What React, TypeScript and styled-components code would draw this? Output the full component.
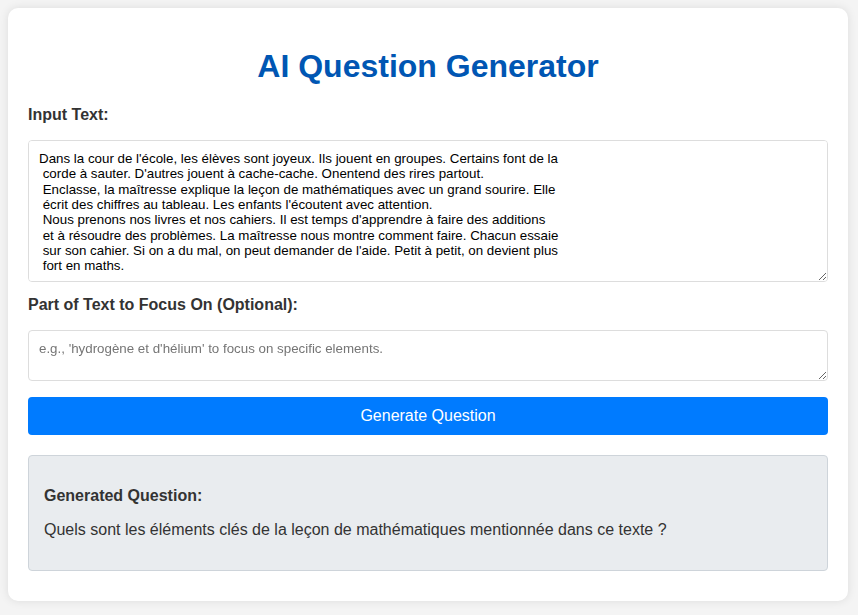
import React, { useState } from 'react';
import styled, { createGlobalStyle } from 'styled-components';

const GlobalStyle = createGlobalStyle`
  html, body {
    margin: 0;
    padding: 0;
    background: #f4f4f4;
    font-family: "Liberation Sans", Arial, sans-serif;
  }
  body {
    padding: 8px 10px 8px 8px;
  }
`;

const sampleText = `Dans la cour de l'école, les élèves sont joyeux. Ils jouent en groupes. Certains font de la
 corde à sauter. D'autres jouent à cache-cache. Onentend des rires partout.
 Enclasse, la maîtresse explique la leçon de mathématiques avec un grand sourire. Elle
 écrit des chiffres au tableau. Les enfants l'écoutent avec attention.
 Nous prenons nos livres et nos cahiers. Il est temps d'apprendre à faire des additions
 et à résoudre des problèmes. La maîtresse nous montre comment faire. Chacun essaie
 sur son cahier. Si on a du mal, on peut demander de l'aide. Petit à petit, on devient plus
 fort en maths.`;

function App(): JSX.Element {
  const [text, setText] = useState(sampleText);
  const [focus, setFocus] = useState('');
  const [question] = useState(
    'Quels sont les éléments clés de la leçon de mathématiques mentionnée dans ce texte ?'
  );

  return (
    <>
      <GlobalStyle />
      <Card>
        <Title>AI Question Generator</Title>
        <Label htmlFor="input-text">Input Text:</Label>
        <TextArea
          id="input-text"
          $height={142}
          value={text}
          onChange={(e) => setText(e.target.value)}
        />
        <Label htmlFor="focus-text">Part of Text to Focus On (Optional):</Label>
        <TextArea
          id="focus-text"
          $height={51}
          placeholder="e.g., 'hydrogène et d'hélium' to focus on specific elements."
          value={focus}
          onChange={(e) => setFocus(e.target.value)}
        />
        <Button type="button">Generate Question</Button>
        <Result>
          <ResultTitle>Generated Question:</ResultTitle>
          <ResultText>{question}</ResultText>
        </Result>
      </Card>
    </>
  );
}

const Card = styled.div`
  background: #ffffff;
  border-radius: 10px;
  box-shadow: 0 0 10px rgba(0, 0, 0, 0.1);
  padding: 20px 20px 30px;
  display: flex;
  flex-direction: column;
`;

const Title = styled.h1`
  margin: 20px 0 21px;
  font-size: 32px;
  line-height: 37px;
  font-weight: 700;
  text-align: center;
  color: #0056b3;
`;

const Label = styled.label`
  display: block;
  font-size: 16px;
  line-height: 18px;
  font-weight: 700;
  color: #333333;
  margin-bottom: 16px;
`;

interface TextAreaProps {
  $height: number;
}

const TextArea = styled.textarea<TextAreaProps>`
  box-sizing: border-box;
  width: 100%;
  height: ${({ $height }) => $height}px;
  padding: 10px;
  margin: 0 0 14px;
  border: 1px solid #dddddd;
  border-radius: 4px;
  font-family: "Liberation Sans", Arial, sans-serif;
  font-size: 13.333px;
  line-height: 15.33px;
  color: #000000;
  background: #ffffff;

  &::placeholder {
    color: #757575;
  }

  &:focus {
    outline: none;
  }
`;

const Button = styled.button`
  box-sizing: border-box;
  width: 100%;
  height: 38px;
  margin-top: 2px;
  padding: 10px;
  border: none;
  border-radius: 4px;
  background: #007bff;
  color: #ffffff;
  font-family: "Liberation Sans", Arial, sans-serif;
  font-size: 16px;
  line-height: 18px;
  cursor: pointer;

  &:hover {
    background: #0069d9;
  }
`;

const Result = styled.div`
  margin-top: 20px;
  padding: 15px;
  background: #e9ecef;
  border: 1px solid #ced4da;
  border-radius: 4px;
`;

const ResultTitle = styled.h3`
  margin: 16px 0 16px;
  font-size: 16px;
  line-height: 18px;
  font-weight: 700;
  color: #333333;
`;

const ResultText = styled.p`
  margin: 0 0 16px;
  font-size: 16px;
  line-height: 18px;
  color: #333333;
`;

export default App;
